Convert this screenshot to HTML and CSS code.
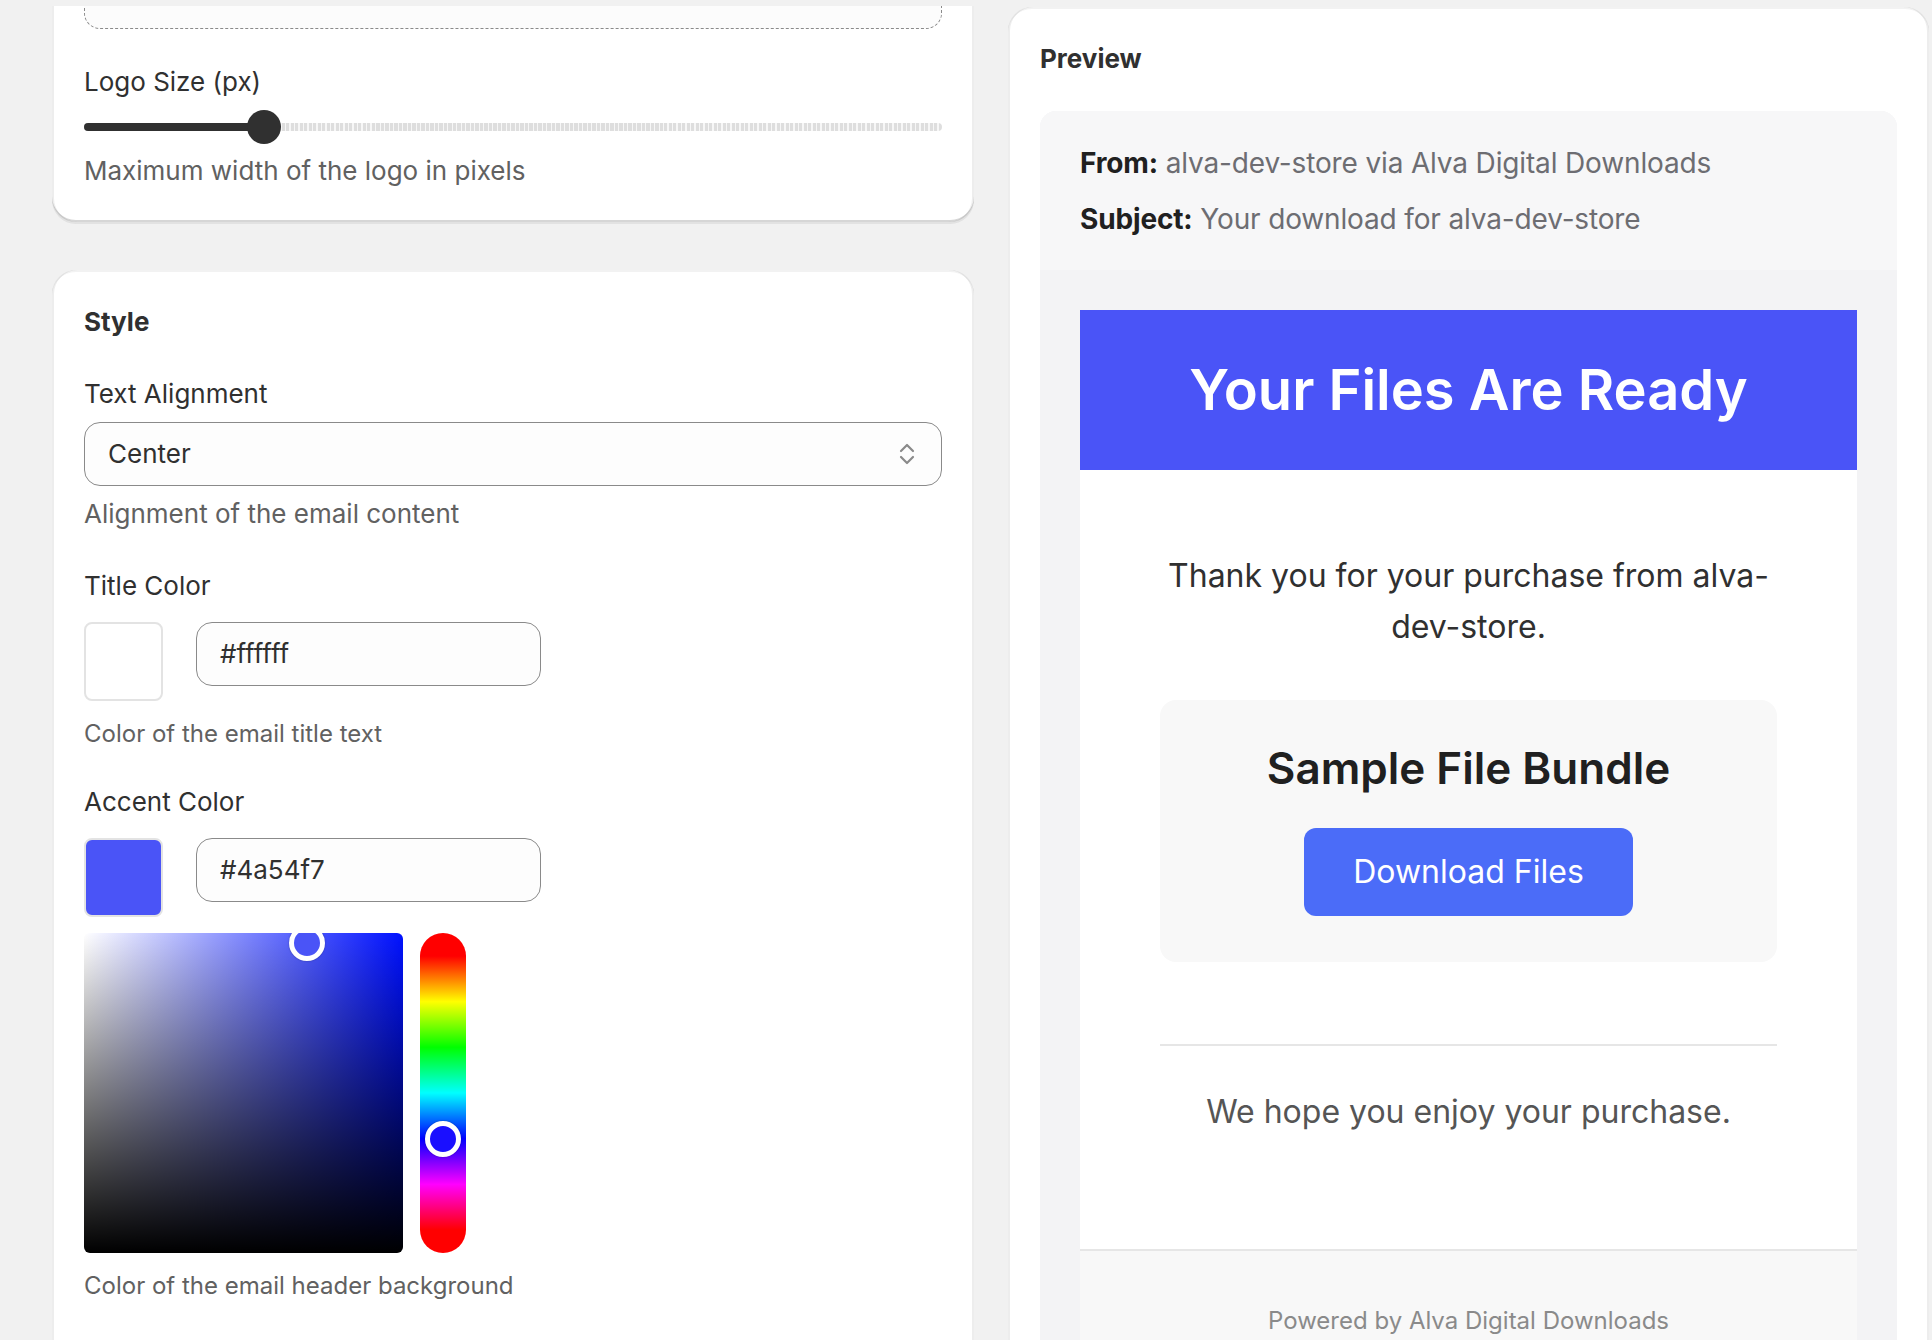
FILE: index.html
```html
<!DOCTYPE html>
<html lang="en">
<head>
<meta charset="utf-8">
<title>Email settings</title>
<link rel="stylesheet" href="styles.css">
</head>
<body>
<div class="page">
  <div class="col col-left">
    <div class="card card-logo">
      <div class="dropzone"></div>
      <div class="field field-range">
        <div class="label">Logo Size (px)</div>
        <div class="range">
          <div class="range-track"></div>
          <div class="range-fill" style="width:21%"></div>
          <div class="range-thumb" style="left:21%"></div>
        </div>
        <div class="help">Maximum width of the logo in pixels</div>
      </div>
    </div>

    <div class="card card-style">
      <h2 class="card-title">Style</h2>

      <div class="field">
        <div class="label">Text Alignment</div>
        <div class="select">
          <span class="select-value">Center</span>
          <svg class="select-icon" viewBox="0 0 16 24" width="16" height="24" aria-hidden="true">
            <polyline points="2,9 8,3 14,9" fill="none" stroke="#8a8a8a" stroke-width="2.2" stroke-linecap="round" stroke-linejoin="round"/>
            <polyline points="2,15 8,21 14,15" fill="none" stroke="#8a8a8a" stroke-width="2.2" stroke-linecap="round" stroke-linejoin="round"/>
          </svg>
        </div>
        <div class="help">Alignment of the email content</div>
      </div>

      <div class="field">
        <div class="label">Title Color</div>
        <div class="color-row">
          <div class="swatch swatch-white"></div>
          <div class="text-input">#ffffff</div>
        </div>
        <div class="help help-sm">Color of the email title text</div>
      </div>

      <div class="field">
        <div class="label">Accent Color</div>
        <div class="color-row">
          <div class="swatch swatch-accent"></div>
          <div class="text-input">#4a54f7</div>
        </div>
        <div class="picker">
          <div class="sat-square">
            <div class="sat-handle"></div>
          </div>
          <div class="hue-bar">
            <div class="hue-handle"></div>
          </div>
        </div>
        <div class="help help-sm help-last">Color of the email header background</div>
      </div>
    </div>
  </div>

  <div class="col col-right">
    <div class="card card-preview">
      <h2 class="card-title">Preview</h2>
      <div class="email">
        <div class="email-meta">
          <div class="meta-line"><b>From:</b> alva-dev-store via Alva Digital Downloads</div>
          <div class="meta-line"><b>Subject:</b> Your download for alva-dev-store</div>
        </div>
        <div class="email-canvas">
          <div class="email-body">
            <div class="email-header">Your Files Are Ready</div>
            <div class="email-content">
              <p class="intro">Thank you for your purchase from alva-dev-store.</p>
              <div class="product">
                <div class="product-title">Sample File Bundle</div>
                <div class="download-btn">Download Files</div>
              </div>
              <hr class="divider">
              <p class="outro">We hope you enjoy your purchase.</p>
            </div>
            <div class="email-footer">Powered by Alva Digital Downloads</div>
          </div>
        </div>
      </div>
    </div>
  </div>
</div>
</body>
</html>
```

FILE: styles.css
```css
* { box-sizing: border-box; }

html, body {
  margin: 0;
  padding: 0;
  background: #f1f1f1;
  height: 1340px;
  overflow: hidden;
}

body {
  font-family: Inter, "Noto Sans", "Liberation Sans", sans-serif;
  color: #303030;
  font-size: 26px;
  line-height: 40px;
}

.page {
  display: flex;
  gap: 34px;
  padding: 6px 0 0 52px;
  height: 1340px;
}

.col {
  height: 1334px;
  overflow: hidden;
}

.col-left {
  width: 922px;
  flex: 0 0 922px;
}

.col-right {
  width: 921px;
  flex: 0 0 921px;
  padding-top: 1px;
}

.card {
  background: #fff;
  border-radius: 24px;
  padding: 32px;
  box-shadow:
    inset 0 -2px 0 rgba(0, 0, 0, 0.16),
    inset 2px 0 0 rgba(0, 0, 0, 0.07),
    inset -2px 0 0 rgba(0, 0, 0, 0.07),
    inset 0 2px 0 rgba(0, 0, 0, 0.05),
    0 2px 0 rgba(26, 26, 26, 0.07);
}

.card-logo {
  margin-top: -129px;
  padding-bottom: 31px;
}

.dropzone {
  height: 120px;
  border: 1px dashed #8a8a8a;
  border-radius: 16px;
  background: #fcfcfc;
  margin-bottom: 33px;
}

.card-style {
  margin-top: 48px;
  min-height: 1200px;
}

.card-title {
  margin: 0;
  font-size: 26px;
  line-height: 40px;
  font-weight: 650;
  color: #303030;
}

.card-style .card-title {
  margin-bottom: 32px;
}

.field {
  display: flex;
  flex-direction: column;
}

.card-style .field + .field {
  margin-top: 32px;
}

.label {
  font-size: 26px;
  line-height: 40px;
  color: #303030;
  margin-bottom: 8px;
}

.help {
  font-size: 26px;
  line-height: 40px;
  color: #616161;
  margin-top: 8px;
}

.help-sm {
  font-size: 24px;
  line-height: 32px;
  margin-top: 17px;
}

.help-last {
  margin-top: 17px;
}

/* range slider */
.range {
  position: relative;
  height: 32px;
  margin-top: 1px;
}

.range-track {
  position: absolute;
  left: 0;
  right: 0;
  top: 12px;
  height: 8px;
  border-radius: 4px;
  background: repeating-linear-gradient(to right, #dedede 0 3px, #f7f7f7 3px 4.5px);
}

.range-fill {
  position: absolute;
  left: 0;
  top: 12px;
  height: 8px;
  border-radius: 4px;
  background: #303030;
}

.range-thumb {
  position: absolute;
  top: -1px;
  width: 34px;
  height: 34px;
  margin-left: -17px;
  border-radius: 50%;
  background: #303030;
}

/* select */
.select {
  display: flex;
  align-items: center;
  justify-content: space-between;
  height: 64px;
  border: 1px solid #8a8a8a;
  border-radius: 16px;
  background: #fdfdfd;
  padding: 0 26px 0 23px;
}

.select-value {
  font-size: 26px;
  color: #303030;
}

.select-icon {
  display: block;
}

/* color fields */
.color-row {
  display: flex;
  align-items: flex-start;
  gap: 33px;
  margin-top: 8px;
}

.swatch {
  width: 79px;
  height: 79px;
  border-radius: 8px;
  border: 2px solid #e3e3e3;
}

.swatch-white { background: #fff; }
.swatch-accent { background: #4a54f7; }

.text-input {
  width: 345px;
  height: 64px;
  border: 1px solid #8a8a8a;
  border-radius: 16px;
  background: #fdfdfd;
  padding: 0 23px;
  display: flex;
  align-items: center;
  font-size: 26px;
  color: #303030;
}

/* picker */
.picker {
  display: flex;
  gap: 17px;
  margin-top: 16px;
}

.sat-square {
  position: relative;
  width: 319px;
  height: 320px;
  border-radius: 6px;
  overflow: hidden;
  background:
    linear-gradient(to top, #000, rgba(0, 0, 0, 0)),
    linear-gradient(to right, #fff, hsl(236, 100%, 50%));
}

.sat-handle {
  position: absolute;
  left: 205px;
  top: -8px;
  width: 36px;
  height: 36px;
  border-radius: 50%;
  border: 5px solid #fff;
  background: #4a54f7;
  box-shadow: 0 0 2px rgba(0, 0, 0, 0.3);
}

.hue-bar {
  position: relative;
  width: 46px;
  height: 320px;
  border-radius: 23px;
  background: linear-gradient(to bottom,
    #f00 7.19%, #ff0 21.46%, #0f0 35.73%, #0ff 50%,
    #00f 64.27%, #f0f 78.54%, #f00 92.81%);
}

.hue-handle {
  position: absolute;
  left: 5px;
  top: 188px;
  width: 36px;
  height: 36px;
  border-radius: 50%;
  border: 5px solid #fff;
  background: #1a0fff;
  box-shadow: 0 0 2px rgba(0, 0, 0, 0.3);
}

/* preview */
.card-preview {
  min-height: 1400px;
}

.card-preview .card-title {
  margin-bottom: 32px;
}

.email {
  border-radius: 16px 16px 0 0;
  overflow: hidden;
  background: #f3f3f5;
}

.email-meta {
  background: #f7f7f8;
  padding: 32px 40px 31px;
  display: flex;
  flex-direction: column;
  gap: 16px;
}

.meta-line {
  font-size: 28px;
  line-height: 40px;
  color: #6d6d72;
  letter-spacing: -0.15px;
}

.meta-line b {
  color: #202020;
  font-weight: 700;
}

.email-canvas {
  padding: 40px;
  min-height: 1100px;
}

.email-body {
  background: #fff;
}

.email-header {
  background: #4a54f7;
  color: #fff;
  text-align: center;
  font-size: 56px;
  line-height: 80px;
  font-weight: 600;
  padding: 40px 20px;
}

.email-content {
  padding: 80px 80px 80px;
  text-align: center;
}

.intro {
  margin: 0 0 48px;
  font-size: 32px;
  line-height: 51px;
  color: #303030;
}

.product {
  background: #f8f8f8;
  border-radius: 16px;
  padding: 41px 40px 46px;
  display: flex;
  flex-direction: column;
  align-items: center;
}

.product-title {
  font-size: 44px;
  line-height: 54px;
  font-weight: 600;
  color: #202020;
  margin-bottom: 33px;
}

.download-btn {
  background: #4b6cf8;
  color: #fff;
  font-size: 32px;
  line-height: 40px;
  padding: 24px 49px;
  border-radius: 12px;
}

.divider {
  border: 0;
  height: 2px;
  background: #e6e6e6;
  margin: 82px 0 40px;
}

.outro {
  margin: 0 0 32px;
  font-size: 32px;
  line-height: 51px;
  color: #555555;
}

.email-footer {
  border-top: 2px solid #e6e6e6;
  background: #f8f8f8;
  text-align: center;
  font-size: 24px;
  line-height: 36px;
  color: #8a8a8a;
  padding: 52px 20px 60px;
}
```
